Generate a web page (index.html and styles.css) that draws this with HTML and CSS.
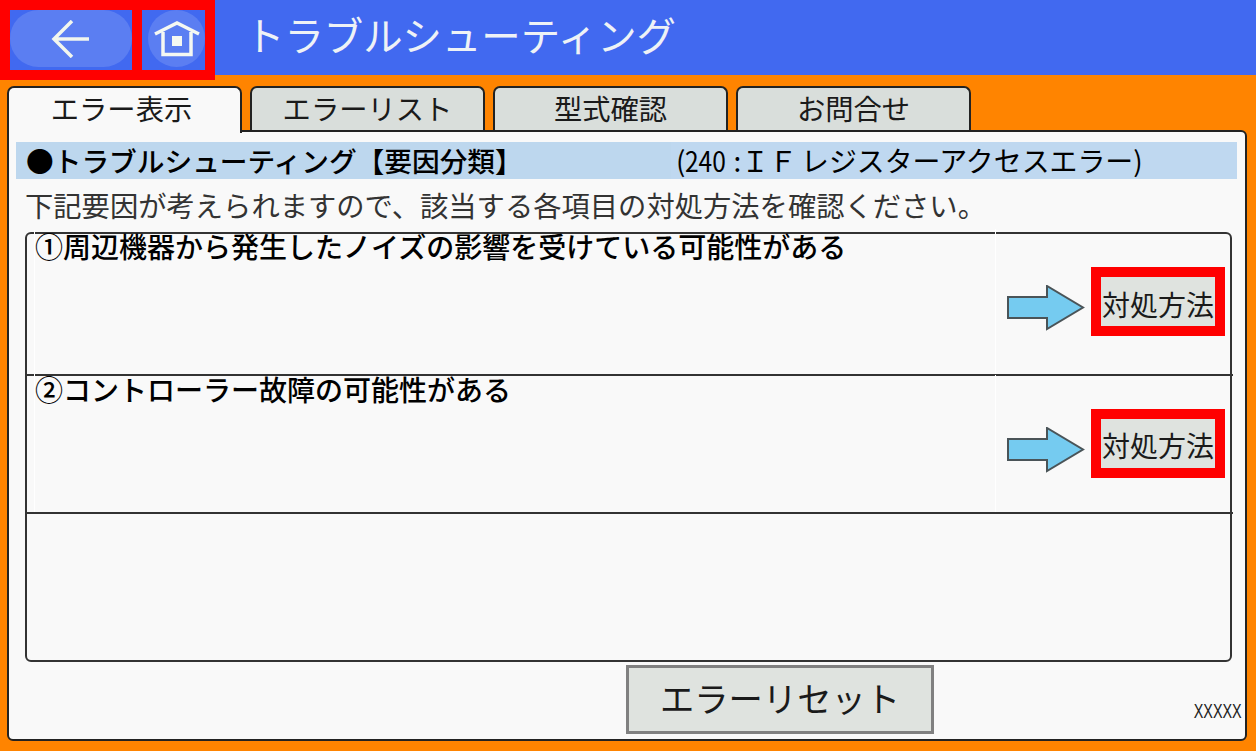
FILE: index.html
```html
<!DOCTYPE html>
<html lang="ja">
<head>
<meta charset="utf-8">
<title>トラブルシューティング</title>
<link rel="stylesheet" href="styles.css">
</head>
<body>
<div class="app">
  <header class="header">
    <div class="nav">
      <div class="navbox backbox">
        <button class="back">
          <svg width="40" height="38" viewBox="0 0 40 38"><path d="M21 1 L3 19 L21 37 M3 19 H38" fill="none" stroke="#f2f6ee" stroke-width="3.5"/></svg>
        </button>
      </div>
      <div class="navbox homebox">
        <button class="home">
          <svg width="46" height="36" viewBox="0 0 46 36"><path d="M1 13 L23 2 L45 13" fill="none" stroke="#f5f8f2" stroke-width="3.5"/><path d="M9 11 V33.5 H37 V11" fill="none" stroke="#f5f8f2" stroke-width="3.5"/><rect x="18" y="15" width="10" height="10" fill="#f5f8f2"/></svg>
        </button>
      </div>
    </div>
    <h1 class="title">トラブルシューティング</h1>
  </header>
  <nav class="tabs">
    <div class="tab active">エラー表示</div>
    <div class="tab">エラーリスト</div>
    <div class="tab">型式確認</div>
    <div class="tab">お問合せ</div>
  </nav>
  <main class="panel">
    <div class="band">
      <div class="band-left">●トラブルシューティング【要因分類】</div>
      <div class="band-right">(<span class="num">240</span><span class="colon">:</span>Ｉ<span class="wide">Ｆ</span>レジスターアクセスエラー)</div>
    </div>
    <p class="desc">下記要因が考えられますので、該当する各項目の対処方法を確認ください。</p>
    <div class="list">
      <div class="row row-a">
        <div class="cause">①周辺機器から発生したノイズの影響を受けている可能性がある</div>
        <div class="action">
          <svg class="arrow" width="78" height="46" viewBox="0 0 78 46"><path d="M1 12 H40 V1 L76 22.5 L40 44 V33 H1 Z" fill="#75cbf0" stroke="#4a5458" stroke-width="2"/></svg>
          <div class="redbox"><button class="fix">対処方法</button></div>
        </div>
      </div>
      <div class="row row-b">
        <div class="cause">②コントローラー故障の可能性がある</div>
        <div class="action">
          <svg class="arrow" width="78" height="46" viewBox="0 0 78 46"><path d="M1 12 H40 V1 L76 22.5 L40 44 V33 H1 Z" fill="#75cbf0" stroke="#4a5458" stroke-width="2"/></svg>
          <div class="redbox"><button class="fix">対処方法</button></div>
        </div>
      </div>
    </div>
    <div class="footer">
      <button class="reset">エラーリセット</button>
      <span class="code">XXXXX</span>
    </div>
  </main>
</div>
</body>
</html>
```
FILE: styles.css
```css
* { box-sizing: border-box; }
html, body { margin: 0; padding: 0; }
body { width: 1256px; height: 751px; overflow: hidden; font-family: "Noto Sans CJK JP", "Noto Sans", sans-serif; color: #1a1a1a; }
button { font: inherit; color: inherit; padding: 0; margin: 0; }
.app { width: 1256px; height: 751px; background: #ff8400; display: flex; flex-direction: column; }
.header { height: 75px; flex: none; background: #4169f0; display: flex; align-items: flex-start; }
.nav { width: 215px; height: 80px; background: #ff0000; padding: 10px; display: flex; gap: 10px; flex: none; }
.navbox { height: 60px; background: #4169f0; display: flex; align-items: flex-start; }
.backbox { width: 122px; }
.homebox { width: 63px; justify-content: flex-end; }
.back { width: 122px; height: 57px; border: 0; border-radius: 29px; background: #5b7ef2; display: flex; align-items: center; justify-content: center; }
.home { width: 57px; height: 57px; border: 0; border-radius: 50%; background: #5b7ef2; display: flex; align-items: center; justify-content: center; }
.title { margin: 0 0 0 30px; font-size: 39.4px; line-height: 68px; font-weight: 400; color: #eef2f6; white-space: nowrap; }
.tabs { flex: none; height: 44px; margin-top: 11px; padding-left: 7px; display: flex; gap: 8px; position: relative; z-index: 1; }
.tab { width: 235px; height: 44px; background: #d9dedb; border: 2px solid #222; border-bottom: 0; border-radius: 7px 7px 0 0; font-size: 28.3px; line-height: 39px; text-align: center; }
.tab.active { background: #f9f9f9; height: 47px; padding-right: 6px; }
.panel { flex: none; margin-left: 7px; width: 1240px; height: 611px; background: #f9f9f9; border: 2px solid #222; border-radius: 0 6px 6px 6px; padding: 10px 8px 0 7px; display: flex; flex-direction: column; }
.band { height: 37px; background: #bdd7ee; display: flex; font-size: 27.7px; line-height: 37px; flex: none; color: #000; }
.band-left { width: 655px; padding-left: 10px; white-space: nowrap; font-weight: 500; }
.band-right { padding-left: 5px; white-space: nowrap; font-weight: 400; font-size: 27.9px; background: #bfd8f0; flex: 1; }
.num { display: inline-block; width: 44px; transform: scaleX(.88); transform-origin: left; }
.colon { margin: 0 0 0 4px; }
.wide { margin-right: 4px; }
.desc { margin: 8px 0 0 9px; font-size: 28.3px; line-height: 35px; color: #333; white-space: nowrap; height: 45px; flex: none; }
.list { width: 1207px; height: 430px; margin-left: 9px; border: 2px solid #333; border-radius: 6px; flex: none; }
.row { border-bottom: 2px solid #333; display: flex; justify-content: space-between; margin-right: -3px; }
.row-a { height: 142px; }
.row-b { height: 138px; }
.cause { flex: 1; font-size: 28px; line-height: 32px; font-weight: 500; color: #000; margin: -4px 0 0 7px; border-left: 1px solid #ffffff; white-space: nowrap; }
.row-b .cause { margin-top: -3px; }
.action { width: 238px; display: flex; align-items: center; padding-left: 11px; margin-top: -5px; border-left: 1px solid #ffffff; }
.row-b .action { margin-top: -1px; }
.arrow { flex: none; margin-top: 13px; }
.redbox { width: 134px; height: 69px; background: #ff0000; padding: 10px; margin-left: 6px; flex: none; }
.fix { width: 114px; height: 49px; border: 0; padding-top: 5px; background: #dfe3df; font-size: 28px; line-height: 44px; text-align: center; white-space: nowrap; display: block; }
.row-b .fix { padding-top: 2px; }
.footer { flex: 1; position: relative; display: flex; padding-top: 3px; align-items: flex-start; }
.reset { width: 308px; height: 69px; border: 3px solid #808080; background: #dfe3df; font-size: 34.3px; line-height: 57px; margin-left: 610px; white-space: nowrap; padding-bottom: 4px; }
.code { position: absolute; right: -5px; bottom: 17px; font-family: "Liberation Sans", sans-serif; font-size: 20px; line-height: 22px; color: #222; transform: scaleX(.72); transform-origin: right; }
```
